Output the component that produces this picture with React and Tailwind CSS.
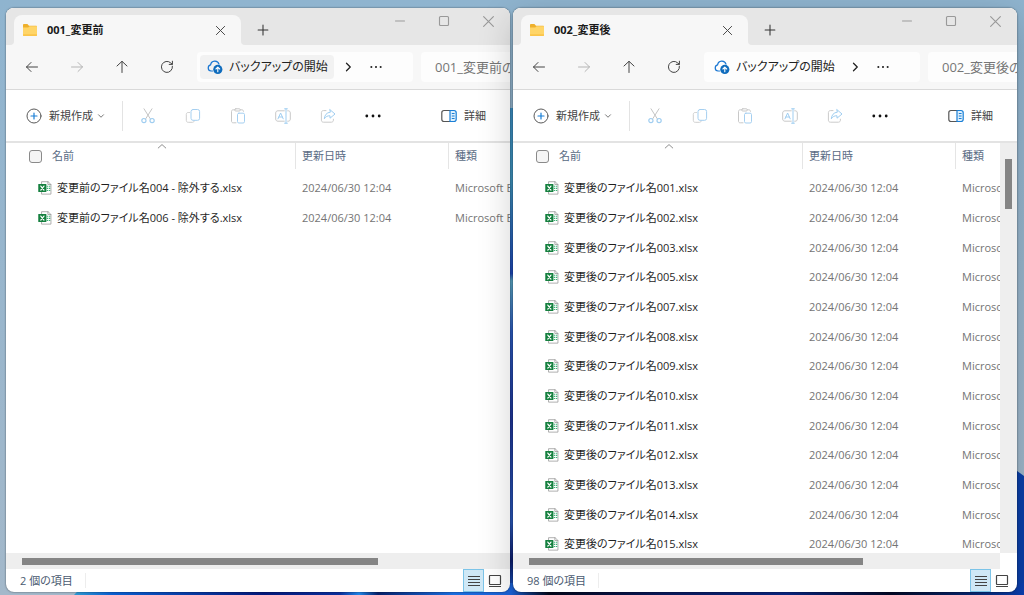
// Two file explorer windows side by side on the desktop

const beforeFiles = ['変更前のファイル名004 - 除外する.xlsx', '変更前のファイル名006 - 除外する.xlsx'];

const afterFiles = ['001', '002', '003', '005', '007', '008', '009', '010', '011', '012', '013', '014', '015'].map(
  (n) => `変更後のファイル名${n}.xlsx`
);

const Svg = ({ size = 16, className = '', children }) => (
  <svg
    width={size}
    height={size}
    viewBox="0 0 16 16"
    fill="none"
    stroke="currentColor"
    strokeLinecap="round"
    strokeLinejoin="round"
    className={`shrink-0 ${className}`}
    aria-hidden="true"
  >
    {children}
  </svg>
);

const FolderIcon = () => (
  <Svg>
    <path d="M1 3.2c0-.7.4-1.2 1-1.2h3.4l1.6 1.8H14c.6 0 1 .4 1 1V6H1z" fill="#eeb02c" stroke="none" />
    <path d="M1 5.5h5.2L7.6 4.3H15v8.6c0 .6-.4 1-1 1H2c-.6 0-1-.4-1-1z" fill="#ffd568" stroke="none" />
    <path d="M1 12.2h14v.7c0 .6-.4 1-1 1H2c-.6 0-1-.4-1-1z" fill="#fbc54a" stroke="none" />
  </Svg>
);

const BackIcon = () => <Svg><path d="M13.5 8h-11M7 3.5 2.5 8 7 12.5" /></Svg>;
const ForwardIcon = () => <Svg><path d="M2.5 8h11M9 3.5 13.5 8 9 12.5" /></Svg>;
const UpIcon = () => <Svg><path d="M8 13.5v-11M3 7l5-4.7L13 7" /></Svg>;
const RefreshIcon = () => <Svg><path d="M13.4 7.2A5.5 5.5 0 1 1 11.8 4l1.4 1.2M13.4 2.2v3.2h-3.2" /></Svg>;
const PlusIcon = () => <Svg size={12}><path d="M8 1.5v13M1.5 8h13" strokeWidth="1.4" /></Svg>;
const CloseIcon = ({ size = 12 }) => <Svg size={size}><path d="M2 2l12 12M14 2 2 14" strokeWidth="1.4" /></Svg>;
const MinIcon = () => <Svg size={12}><path d="M2 8h12" strokeWidth="1.3" /></Svg>;
const MaxIcon = () => <Svg size={12}><rect x="2" y="2" width="12" height="12" rx="1.4" strokeWidth="1.5" /></Svg>;
const ChevronRight = () => <Svg size={12}><path d="m6 3 5 5-5 5" strokeWidth="1.7" /></Svg>;
const ChevronDown = () => <Svg size={8} className="text-[#777]"><path d="m3 5.5 5 5 5-5" strokeWidth="2" /></Svg>;

const Dots = ({ size }) => (
  <Svg size={size}>
    <g fill="currentColor" stroke="none">
      <circle cx="1.8" cy="8" r="1.4" />
      <circle cx="8" cy="8" r="1.4" />
      <circle cx="14.2" cy="8" r="1.4" />
    </g>
  </Svg>
);

const CloudIcon = () => (
  <Svg>
    <path d="M5.5 12H4a3.1 3.1 0 0 1-.4-6.1A4.3 4.3 0 0 1 12 5.2" stroke="#1976d2" strokeWidth="1.2" />
    <circle cx="10.8" cy="10.4" r="4.6" fill="#0f6cbd" stroke="none" />
    <path d="M10.8 12.8V8.3M8.9 10l1.9-1.9 1.9 1.9" stroke="#fff" strokeWidth="1.1" />
  </Svg>
);

const NewIcon = () => (
  <Svg>
    <circle cx="8" cy="8" r="7" stroke="#5a5a5a" />
    <path d="M8 5v6M5 8h6" stroke="#1a7fd6" strokeWidth="1.2" />
  </Svg>
);

const CutIcon = () => (
  <Svg>
    <path d="M4 .8l6.3 10M12 .8 5.7 10.8" stroke="#c4c4c4" />
    <circle cx="3.9" cy="12.6" r="2.1" stroke="#9fcdf0" strokeWidth="1.2" />
    <circle cx="12.1" cy="12.6" r="2.1" stroke="#9fcdf0" strokeWidth="1.2" />
  </Svg>
);

const CopyIcon = () => (
  <Svg>
    <path d="M4.5 4.5H3.2C2 4.5 1.3 5.2 1.3 6.4v6c0 1.2.7 1.9 1.9 1.9h4.3c1 0 1.7-.6 1.8-1.5" stroke="#cfcfcf" />
    <rect x="6" y="1.5" width="8.6" height="10.8" rx="2" stroke="#a5cff0" />
  </Svg>
);

const PasteIcon = () => (
  <Svg>
    <path d="M6 14.8H3.2c-1 0-1.7-.6-1.7-1.6V3.4c0-1 .7-1.6 1.7-1.6h1.5M10.3 1.8h1.5c1 0 1.7.6 1.7 1.5" stroke="#c8c8c8" />
    <rect x="4.7" y=".8" width="5.6" height="2.2" rx="1.1" stroke="#c8c8c8" />
    <rect x="7.5" y="5.2" width="7" height="9.8" rx="1.4" stroke="#a5cff0" />
  </Svg>
);

const RenameIcon = () => (
  <Svg>
    <path d="M9.3 2.8H3C1.6 2.8.7 3.6.7 5v6c0 1.4.9 2.2 2.3 2.2h6.3M12.7 2.8h.5c1.3 0 2.1.8 2.1 2.1v6.2c0 1.3-.8 2.1-2.1 2.1h-.5" stroke="#c8c8c8" />
    <path d="M3 10.8 5.6 5l2.6 5.8M3.9 9h3.4M11 .8v14.4M9.6.8h2.8M9.6 15.2h2.8" stroke="#9fcdf0" />
  </Svg>
);

const ShareIcon = () => (
  <Svg>
    <path d="M6 2.6H3.4c-1.2 0-2 .8-2 2v7.6c0 1.2.8 2 2 2h8c1.2 0 2-.8 2-2v-1" stroke="#cbcbcb" />
    <path d="M10 1.7 15 6l-5 4.2V7.8C7.5 7.6 5.9 8.5 4.3 10.8 4.6 7.3 6.5 4.5 10 4.2z" stroke="#9fcdf0" />
  </Svg>
);

const DetailsIcon = () => (
  <Svg>
    <path d="M9 2.5H3C1.7 2.5.8 3.4.8 4.7v6.6c0 1.3.9 2.2 2.2 2.2h6" stroke="#555" strokeWidth="1.2" />
    <path d="M9 2.5h4c1.3 0 2.2.9 2.2 2.2v6.6c0 1.3-.9 2.2-2.2 2.2H9z" fill="#dff0fc" stroke="#1a7fd6" strokeWidth="1.2" />
    <path d="M11.2 5.5h2M11.2 8h2M11.2 10.5h2" stroke="#1a7fd6" />
  </Svg>
);

const ExcelIcon = () => (
  <Svg size={14}>
    <path d="M4.5.8h7L14.8 4v11H4.5z" fill="#fff" stroke="#9a9a9a" strokeWidth=".9" />
    <path d="M11.3.8V4h3.5" stroke="#9a9a9a" strokeWidth=".9" />
    <path d="M10 6h1.6M12.4 6H14M10 8.4h1.6M12.4 8.4H14M10 10.8h1.6M12.4 10.8H14" stroke="#3db277" strokeWidth="1.3" strokeLinecap="butt" />
    <rect x=".3" y="3.4" width="9.3" height="9.3" rx=".6" fill="#15803f" stroke="none" />
    <path d="M3.2 5.8l3.6 4.5M6.8 5.8l-3.6 4.5" stroke="#fff" strokeWidth="1.4" />
  </Svg>
);

const ListViewIcon = () => <Svg><path d="M2 3.5h12M2 6.5h12M2 9.5h12M2 12.5h12" stroke="#444" strokeLinecap="butt" /></Svg>;
const ThumbViewIcon = () => (
  <Svg>
    <rect x="2.5" y="2.5" width="11" height="9" rx=".5" stroke="#444" strokeWidth="1.2" />
    <path d="M2 13.5h12" stroke="#444" strokeLinecap="butt" />
  </Svg>
);

const IconButton = ({ label, className = '', children }) => (
  <button type="button" aria-label={label} className={`flex shrink-0 items-center justify-center ${className}`}>
    {children}
  </button>
);

const TitleBar = ({ title }) => (
  <header className="flex h-[37px] shrink-0 bg-[#f7f7f7]">
    <div className="w-2 rounded-br bg-[#e6e6e6]" />
    <div className="w-[227px] shrink-0 bg-[#e6e6e6] pt-[7px]">
      <div className="flex h-[30px] items-center rounded-t-lg bg-[#f7f7f7] pr-[15px] pl-2">
        <FolderIcon />
        <span className="ml-[9px] flex-1 font-bold text-[#1a1a1a]">{title}</span>
        <IconButton label="タブを閉じる" className="text-[#444]">
          <CloseIcon size={11} />
        </IconButton>
      </div>
    </div>
    <div className="flex min-w-0 flex-1 justify-between rounded-bl bg-[#e6e6e6]">
      <IconButton label="新しいタブ" className="mt-[7px] h-[30px] w-11 text-[#333]">
        <PlusIcon />
      </IconButton>
      <div className="flex h-[26px] text-[#999]">
        <IconButton label="最小化" className="w-11"><MinIcon /></IconButton>
        <IconButton label="最大化" className="w-11"><MaxIcon /></IconButton>
        <IconButton label="閉じる" className="w-11"><CloseIcon size={13} /></IconButton>
      </div>
    </div>
  </header>
);

const NavBar = ({ title, hovered }) => (
  <nav className="flex h-[45px] shrink-0 items-center border-b border-[#d9d9d9] bg-[#f7f7f7] pl-[3px] text-[#444]">
    <IconButton label="戻る" className="w-[45px]"><BackIcon /></IconButton>
    <IconButton label="進む" className="w-[45px] text-[#b5b5b5]"><ForwardIcon /></IconButton>
    <IconButton label="上へ" className="w-[45px]"><UpIcon /></IconButton>
    <IconButton label="更新" className="w-[45px]"><RefreshIcon /></IconButton>
    <div className="ml-2 flex h-[30px] w-[216px] shrink-0 rounded bg-[#fdfdfd] p-[3px] text-[#222]">
      <button
        type="button"
        className={`flex w-[134px] items-center gap-1.5 rounded pl-[7px] text-xs whitespace-nowrap ${hovered ? 'bg-[#f2f2f2]' : ''}`}
      >
        <CloudIcon />
        <span>バックアップの開始</span>
      </button>
      <IconButton label="展開" className="w-7"><ChevronRight /></IconButton>
      <IconButton label="その他の場所" className="w-7"><Dots size={12} /></IconButton>
    </div>
    <input
      type="text"
      aria-label="検索"
      placeholder={`${title}の検索`}
      className="ml-2 h-[30px] min-w-0 flex-1 rounded-l bg-[#fdfdfd] pl-3.5 text-[13px] placeholder:text-[#767676]"
    />
  </nav>
);

const ToolBar = () => (
  <div className="flex h-[53px] shrink-0 items-center border-b-2 border-[#e3e3e3] pr-6 pl-5 text-[#444]">
    <button type="button" className="flex w-24 items-center">
      <NewIcon />
      <span className="mr-1 ml-[7px]">新規作成</span>
      <ChevronDown />
    </button>
    <div className="mr-0.5 h-[30px] w-px bg-[#e3e3e3]" />
    <IconButton label="切り取り" className="w-[45px]"><CutIcon /></IconButton>
    <IconButton label="コピー" className="w-[45px]"><CopyIcon /></IconButton>
    <IconButton label="貼り付け" className="w-[45px]"><PasteIcon /></IconButton>
    <IconButton label="名前の変更" className="w-[45px]"><RenameIcon /></IconButton>
    <IconButton label="共有" className="w-[45px]"><ShareIcon /></IconButton>
    <IconButton label="もっと見る" className="w-[45px] text-[#111]"><Dots size={16} /></IconButton>
    <button type="button" className="ml-auto flex items-center gap-[7px]">
      <DetailsIcon />
      <span>詳細</span>
    </button>
  </div>
);

const FileTable = ({ files }) => (
  <table className="w-full table-fixed border-collapse text-left whitespace-nowrap">
    <thead className="text-[#5a6b84]">
      <tr className="h-[30px] align-top">
        <th className="relative w-[290px] p-0 font-normal">
          <label className="flex h-[26px] items-center gap-2.5 border-r border-[#e5e5e5] pl-[23px]">
            <input type="checkbox" className="h-[13px] w-[13px] appearance-none rounded-[3px] border border-[#8a8a8a] bg-[#f5f5f5]" />
            名前
          </label>
          <Svg size={10} className="absolute top-0 left-[151px] text-[#888]">
            <path d="M2 8 8 2.5 14 8" strokeWidth="1.5" />
          </Svg>
        </th>
        <th className="w-[153px] p-0 font-normal">
          <div className="flex h-[26px] items-center border-r border-[#e5e5e5] pl-1.5">更新日時</div>
        </th>
        <th className="p-0 font-normal">
          <div className="flex h-[26px] items-center pl-1.5">種類</div>
        </th>
      </tr>
    </thead>
    <tbody className="text-[#747474]">
      {files.map((name) => (
        <tr key={name} className="h-[30px] nth-[3n]:h-[29px]">
          <td className="p-0">
            <a href="#" className="flex items-center gap-[5px] pl-8 text-[#1f1f1f]">
              <ExcelIcon />
              {name}
            </a>
          </td>
          <td className="p-0 pl-1.5">2024/06/30 12:04</td>
          <td className="overflow-hidden p-0 pl-1.5">Microsoft Excel</td>
        </tr>
      ))}
    </tbody>
  </table>
);

const StatusBar = ({ count }) => (
  <footer className="flex h-[23px] shrink-0 items-center pr-[5px] pl-3.5 text-[#4a5a70]">
    <span className="flex-1">
      <span className="border-r border-[#ededed] pr-3">{count} 個の項目</span>
    </span>
    <IconButton label="詳細表示" className="h-[23px] w-[21px] border border-[#7cc4e8] bg-[#cfe8f6]">
      <ListViewIcon />
    </IconButton>
    <IconButton label="大きいアイコン" className="h-[23px] w-[21px]">
      <ThumbViewIcon />
    </IconButton>
  </footer>
);

const ExplorerWindow = ({ title, files, count, thumb, vertical, hovered, className = '' }) => (
  <section
    aria-label={title}
    className={`flex min-h-0 min-w-0 flex-col overflow-hidden rounded-lg bg-white ${className}`}
  >
    <TitleBar title={title} />
    <NavBar title={title} hovered={hovered} />
    <ToolBar />
    <div className="flex min-h-0 flex-1">
      <div className="min-w-0 flex-1 overflow-hidden">
        <FileTable files={files} />
      </div>
      {vertical && (
        <div className="w-[17px] shrink-0 bg-[#eeeeee] pt-4 pl-[5px]">
          <div className="h-[50px] w-[7px] bg-[#858585]" />
        </div>
      )}
    </div>
    <div className={`flex h-4 shrink-0 ${vertical ? 'pr-[17px]' : ''}`}>
      <div className="flex flex-1 items-center bg-[#eeeeee] pl-4">
        <div className="h-[7px] bg-[#858585]" style={{ width: `${thumb}%` }} />
      </div>
    </div>
    <StatusBar count={count} />
  </section>
);

const Wallpaper = () => (
  <svg className="absolute inset-0 h-full w-full" viewBox="0 0 1024 595" preserveAspectRatio="none" aria-hidden="true">
    <defs>
      <linearGradient id="sky" x1="0" y1="0" x2="0" y2="1">
        <stop offset="0" stopColor="#8fb4cf" />
        <stop offset="1" stopColor="#a3b8ca" />
      </linearGradient>
      <linearGradient id="seam" x1="0" y1="0" x2="0" y2="1">
        <stop offset="0" stopColor="#3c8fc4" />
        <stop offset=".15" stopColor="#3f93bd" />
        <stop offset=".34" stopColor="#1d49b8" />
        <stop offset=".355" stopColor="#5aa5c4" />
        <stop offset=".46" stopColor="#2d5cc0" />
        <stop offset=".64" stopColor="#1f379c" />
        <stop offset=".85" stopColor="#2a58ba" />
        <stop offset=".93" stopColor="#0d1e70" />
        <stop offset="1" stopColor="#1a62d8" />
      </linearGradient>
      <linearGradient id="floor" x1="0" y1="0" x2="1" y2="0">
        <stop offset="0" stopColor="#2f9ad0" />
        <stop offset=".04" stopColor="#0a5fd0" />
        <stop offset=".2" stopColor="#04187a" />
        <stop offset=".28" stopColor="#0a2f9c" />
        <stop offset=".3" stopColor="#1f86e8" />
        <stop offset=".32" stopColor="#06206a" />
        <stop offset=".4" stopColor="#1a6ee0" />
        <stop offset=".46" stopColor="#1a62d8" />
        <stop offset=".5" stopColor="#04091f" />
        <stop offset=".62" stopColor="#0a1c66" />
        <stop offset=".75" stopColor="#0a2a90" />
        <stop offset=".86" stopColor="#030a2a" />
        <stop offset="1" stopColor="#0a3fb0" />
      </linearGradient>
    </defs>
    <rect width="1024" height="595" fill="url(#sky)" />
    <rect x="500" y="108" width="24" height="487" fill="url(#seam)" />
    <path d="M1000 462c10 4 18 9 24 14v119h-24z" fill="#0a3fa8" />
    <path d="M74 595c4-5 10-9 20-12h930v12z" fill="url(#floor)" />
  </svg>
);

export default function App() {
  return (
    <div className="relative h-screen overflow-hidden bg-[#8fb4cf] font-['Open_Sans','Noto_Sans_CJK_JP',sans-serif] text-[11px] leading-4 [font-feature-settings:'palt']">
      <Wallpaper />
      <main className="relative grid h-full grid-cols-2 grid-rows-1 gap-[3px] pt-2 pr-[7px] pb-[3px] pl-1.5">
        <ExplorerWindow
          title="001_変更前"
          files={beforeFiles}
          count={2}
          thumb={73}
          hovered
          className="shadow-[0_0_2px_rgba(0,0,0,0.6)]"
        />
        <ExplorerWindow
          title="002_変更後"
          files={afterFiles}
          count={98}
          thumb={71}
          vertical
          className="shadow-[0_0_2px_rgba(0,0,0,0.6),0_10px_36px_rgba(0,0,0,0.2)]"
        />
      </main>
    </div>
  );
}
